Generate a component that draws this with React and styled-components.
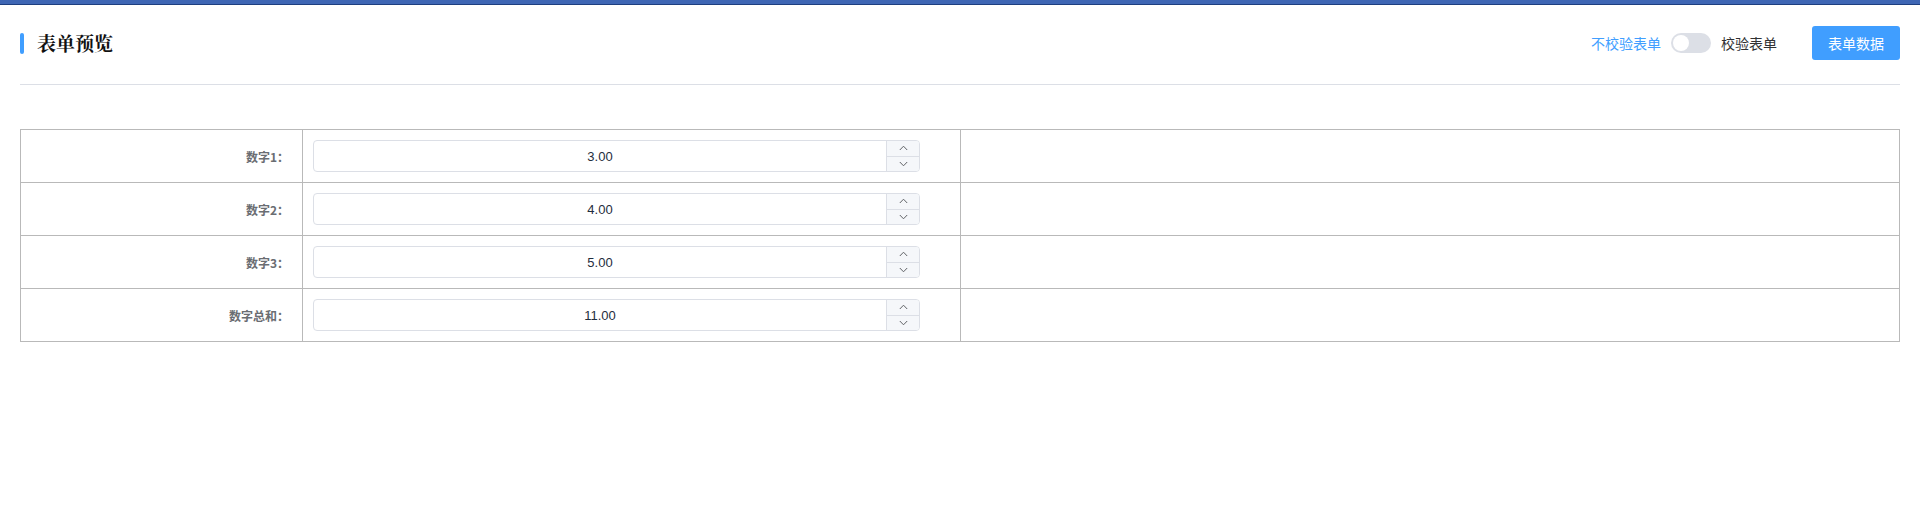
import React from "react";
import styled, { createGlobalStyle } from "styled-components";

const Global = createGlobalStyle`
  html, body { margin: 0; padding: 0; background: #fff; }
  body { font-family: "Noto Sans CJK SC", "Noto Sans", sans-serif; color: #303133; }
  * { box-sizing: border-box; }
`;

const TopBar = styled.div`
  height: 5px;
  background: #3e66b4;
  border-bottom: 1px solid #1d3e7f;
`;

const Page = styled.div`
  padding: 0 20px;
`;

const Header = styled.div`
  display: flex;
  align-items: center;
  justify-content: space-between;
  padding: 21px 0 24px;
  border-bottom: 1px solid #dcdfe6;
`;

const Title = styled.h2`
  margin: 0;
  display: flex;
  align-items: center;
  gap: 13px;
  font-size: 19px;
  font-weight: 700;
  color: #111;
  line-height: 34px;
  font-family: "Noto Serif CJK SC", "Noto Sans CJK SC", serif;
  &::before {
    content: "";
    width: 4px;
    height: 21px;
    border-radius: 2px;
    background: #409eff;
  }
`;

const Actions = styled.div`
  display: flex;
  align-items: center;
`;

const SwitchLabel = styled.span`
  font-size: 14px;
  line-height: 20px;
  color: ${(p) => (p.$active ? "#409eff" : "#303133")};
`;

const Switch = styled.span`
  position: relative;
  display: inline-block;
  width: 40px;
  height: 20px;
  border-radius: 10px;
  background: #dcdfe6;
  margin: 0 10px;
  &::after {
    content: "";
    position: absolute;
    top: 2px;
    left: 2px;
    width: 16px;
    height: 16px;
    border-radius: 50%;
    background: #fff;
  }
`;

const PrimaryButton = styled.button`
  margin-left: 35px;
  height: 34px;
  padding: 0 16px;
  border: none;
  border-radius: 3px;
  background: #409eff;
  color: #fff;
  font-size: 14px;
  font-family: "Noto Sans CJK SC", sans-serif;
`;

const Table = styled.div`
  margin-top: 44px;
  border: 1px solid #b9b9b9;
  border-bottom: none;
`;

const Row = styled.div`
  display: grid;
  grid-template-columns: 282px 658px 1fr;
  border-bottom: 1px solid #b9b9b9;
`;

const LabelCell = styled.div`
  display: flex;
  align-items: center;
  justify-content: flex-end;
  padding-right: 13px;
  border-right: 1px solid #b9b9b9;
  font-size: 12px;
  font-weight: 700;
  color: #6a6d72;
`;

const FieldCell = styled.div`
  padding: 10px 40px 10px 10px;
  border-right: 1px solid #b9b9b9;
`;

const EmptyCell = styled.div``;

const NumberInput = styled.div`
  display: flex;
  height: 32px;
  border: 1px solid #dcdfe6;
  border-radius: 4px;
  overflow: hidden;
`;

const Value = styled.div`
  flex: 1;
  display: flex;
  align-items: center;
  justify-content: center;
  font-family: "Liberation Sans", Arial, sans-serif;
  font-size: 13px;
  color: #1f2d3d;
`;

const Spinner = styled.div`
  width: 33px;
  display: flex;
  flex-direction: column;
  border-left: 1px solid #dcdfe6;
  background: #f5f7fa;
`;

const SpinBtn = styled.div`
  flex: 1;
  display: flex;
  align-items: center;
  justify-content: center;
  & + & { border-top: 1px solid #dcdfe6; }
`;

const Chevron = ({ up }) => (
  <svg width="9" height="6" viewBox="0 0 9 6">
    <polyline
      points={up ? "0.8,5 4.5,1.2 8.2,5" : "0.8,1 4.5,4.8 8.2,1"}
      fill="none"
      stroke="#606266"
      strokeWidth="1"
    />
  </svg>
);

const rows = [
  { label: "数字1：", value: "3.00" },
  { label: "数字2：", value: "4.00" },
  { label: "数字3：", value: "5.00" },
  { label: "数字总和：", value: "11.00" },
];

export default function App() {
  return (
    <>
      <Global />
      <TopBar />
      <Page>
        <Header>
          <Title>表单预览</Title>
          <Actions>
            <SwitchLabel $active>不校验表单</SwitchLabel>
            <Switch />
            <SwitchLabel>校验表单</SwitchLabel>
            <PrimaryButton>表单数据</PrimaryButton>
          </Actions>
        </Header>
        <Table>
          {rows.map((r) => (
            <Row key={r.label}>
              <LabelCell>{r.label}</LabelCell>
              <FieldCell>
                <NumberInput>
                  <Value>{r.value}</Value>
                  <Spinner>
                    <SpinBtn><Chevron up /></SpinBtn>
                    <SpinBtn><Chevron /></SpinBtn>
                  </Spinner>
                </NumberInput>
              </FieldCell>
              <EmptyCell />
            </Row>
          ))}
        </Table>
      </Page>
    </>
  );
}
